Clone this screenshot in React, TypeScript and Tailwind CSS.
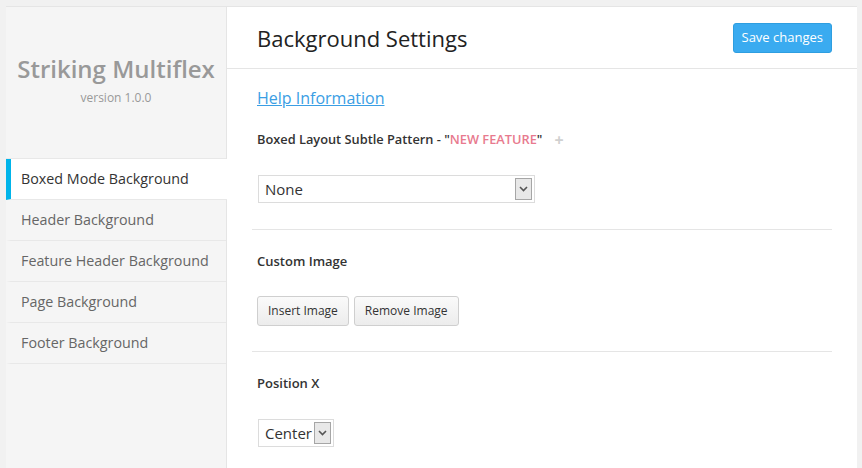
import { useState } from 'react';

const menu = [
  'Boxed Mode Background',
  'Header Background',
  'Feature Header Background',
  'Page Background',
  'Footer Background',
];

function Chevron() {
  return (
    <svg width="9" height="6" viewBox="0 0 9 6" className="block">
      <path d="M1 1 L4.5 4.5 L8 1" fill="none" stroke="#555" strokeWidth="1.6" />
    </svg>
  );
}

function FakeSelect({ value, width }: { value: string; width: string }) {
  return (
    <div className={`flex items-center justify-between h-[28px] border border-[#dcdcdc] bg-white pl-[6px] pr-[2px] ${width}`}>
      <span className="text-[15px] text-[#333]">{value}</span>
      <span className="flex h-[22px] w-[17px] items-center justify-center border border-[#a6a6a6] bg-[#e8e8e8]">
        <Chevron />
      </span>
    </div>
  );
}

export default function App() {
  const [active, setActive] = useState(0);

  return (
    <div className="min-h-[468px] bg-[#f1f1f1] pt-[6px] pl-[6px] pr-[5px]" style={{ fontFamily: '"Open Sans", "Liberation Sans", sans-serif' }}>
      <div className="flex min-h-[462px] border-t border-[#e5e5e5] bg-white">
        {/* Sidebar */}
        <div className="w-[221px] shrink-0 bg-[#f5f5f5] border-r border-[#e5e5e5]">
          <div className="flex h-[151px] flex-col items-center pt-[46px]">
            <h1 className="text-[24px] font-semibold leading-[32px] text-[#999]">Striking Multiflex</h1>
            <p className="mt-[5px] text-[12px] leading-[16px] text-[#999]">version 1.0.0</p>
          </div>
          <ul className="border-t border-[#e8e8e8]">
            {menu.map((item, i) => (
              <li
                key={item}
                onClick={() => setActive(i)}
                className={`relative flex h-[41px] cursor-pointer items-center border-b border-[#e8e8e8] pl-[10px] text-[14.3px] ${
                  active === i ? 'bg-white text-[#333] border-l-[5px] border-l-[#00b4ea] -mr-px' : 'text-[#666] border-l-[5px] border-l-transparent'
                }`}
              >
                {item}
              </li>
            ))}
          </ul>
        </div>

        {/* Main */}
        <div className="flex-1">
          <div className="flex h-[62px] items-center justify-between border-b border-[#e5e5e5] pl-[30px] pr-[25px]">
            <h2 className="text-[22px] leading-[30px] text-[#222]">Background Settings</h2>
            <button className="h-[30px] rounded-[3px] border border-[#2e9ee0] bg-[#3aabf0] px-[8px] text-[13px] text-white">
              Save changes
            </button>
          </div>

          <div className="px-[25px]">
            <div className="pl-[5px] pt-[17px]">
              <a href="#" className="text-[16px] leading-[24px] text-[#3a9ee4] underline">Help Information</a>
            </div>

            <div className="flex items-center pl-[5px] pt-[20px]">
              <span className="text-[12.8px] font-semibold text-[#333]">
                Boxed Layout Subtle Pattern - "<span className="text-[#e87a8e]">NEW FEATURE</span>"
              </span>
              <span className="ml-[12px] text-[16px] font-bold leading-none text-[#d0d0d0]">+</span>
            </div>

            <div className="pl-[6px] pt-[26px] pb-[26px] border-b border-[#e5e5e5]">
              <FakeSelect value="None" width="w-[277px]" />
            </div>

            <div className="pl-[5px] pt-[22px] text-[13px] font-semibold text-[#333]">Custom Image</div>
            <div className="flex gap-[5px] pl-[5px] pt-[24px] pb-[25px] border-b border-[#e5e5e5]">
              <button className="h-[30px] rounded-[3px] border border-[#cfcfcf] bg-gradient-to-b from-[#fafafa] to-[#ececec] px-[10px] text-[12px] text-[#333]">
                Insert Image
              </button>
              <button className="h-[30px] rounded-[3px] border border-[#cfcfcf] bg-gradient-to-b from-[#fafafa] to-[#ececec] px-[10px] text-[12px] text-[#333]">
                Remove Image
              </button>
            </div>

            <div className="pl-[5px] pt-[22px] text-[13px] font-semibold text-[#333]">Position X</div>
            <div className="pl-[6px] pt-[26px]">
              <FakeSelect value="Center" width="w-[76px]" />
            </div>
          </div>
        </div>
      </div>
    </div>
  );
}
